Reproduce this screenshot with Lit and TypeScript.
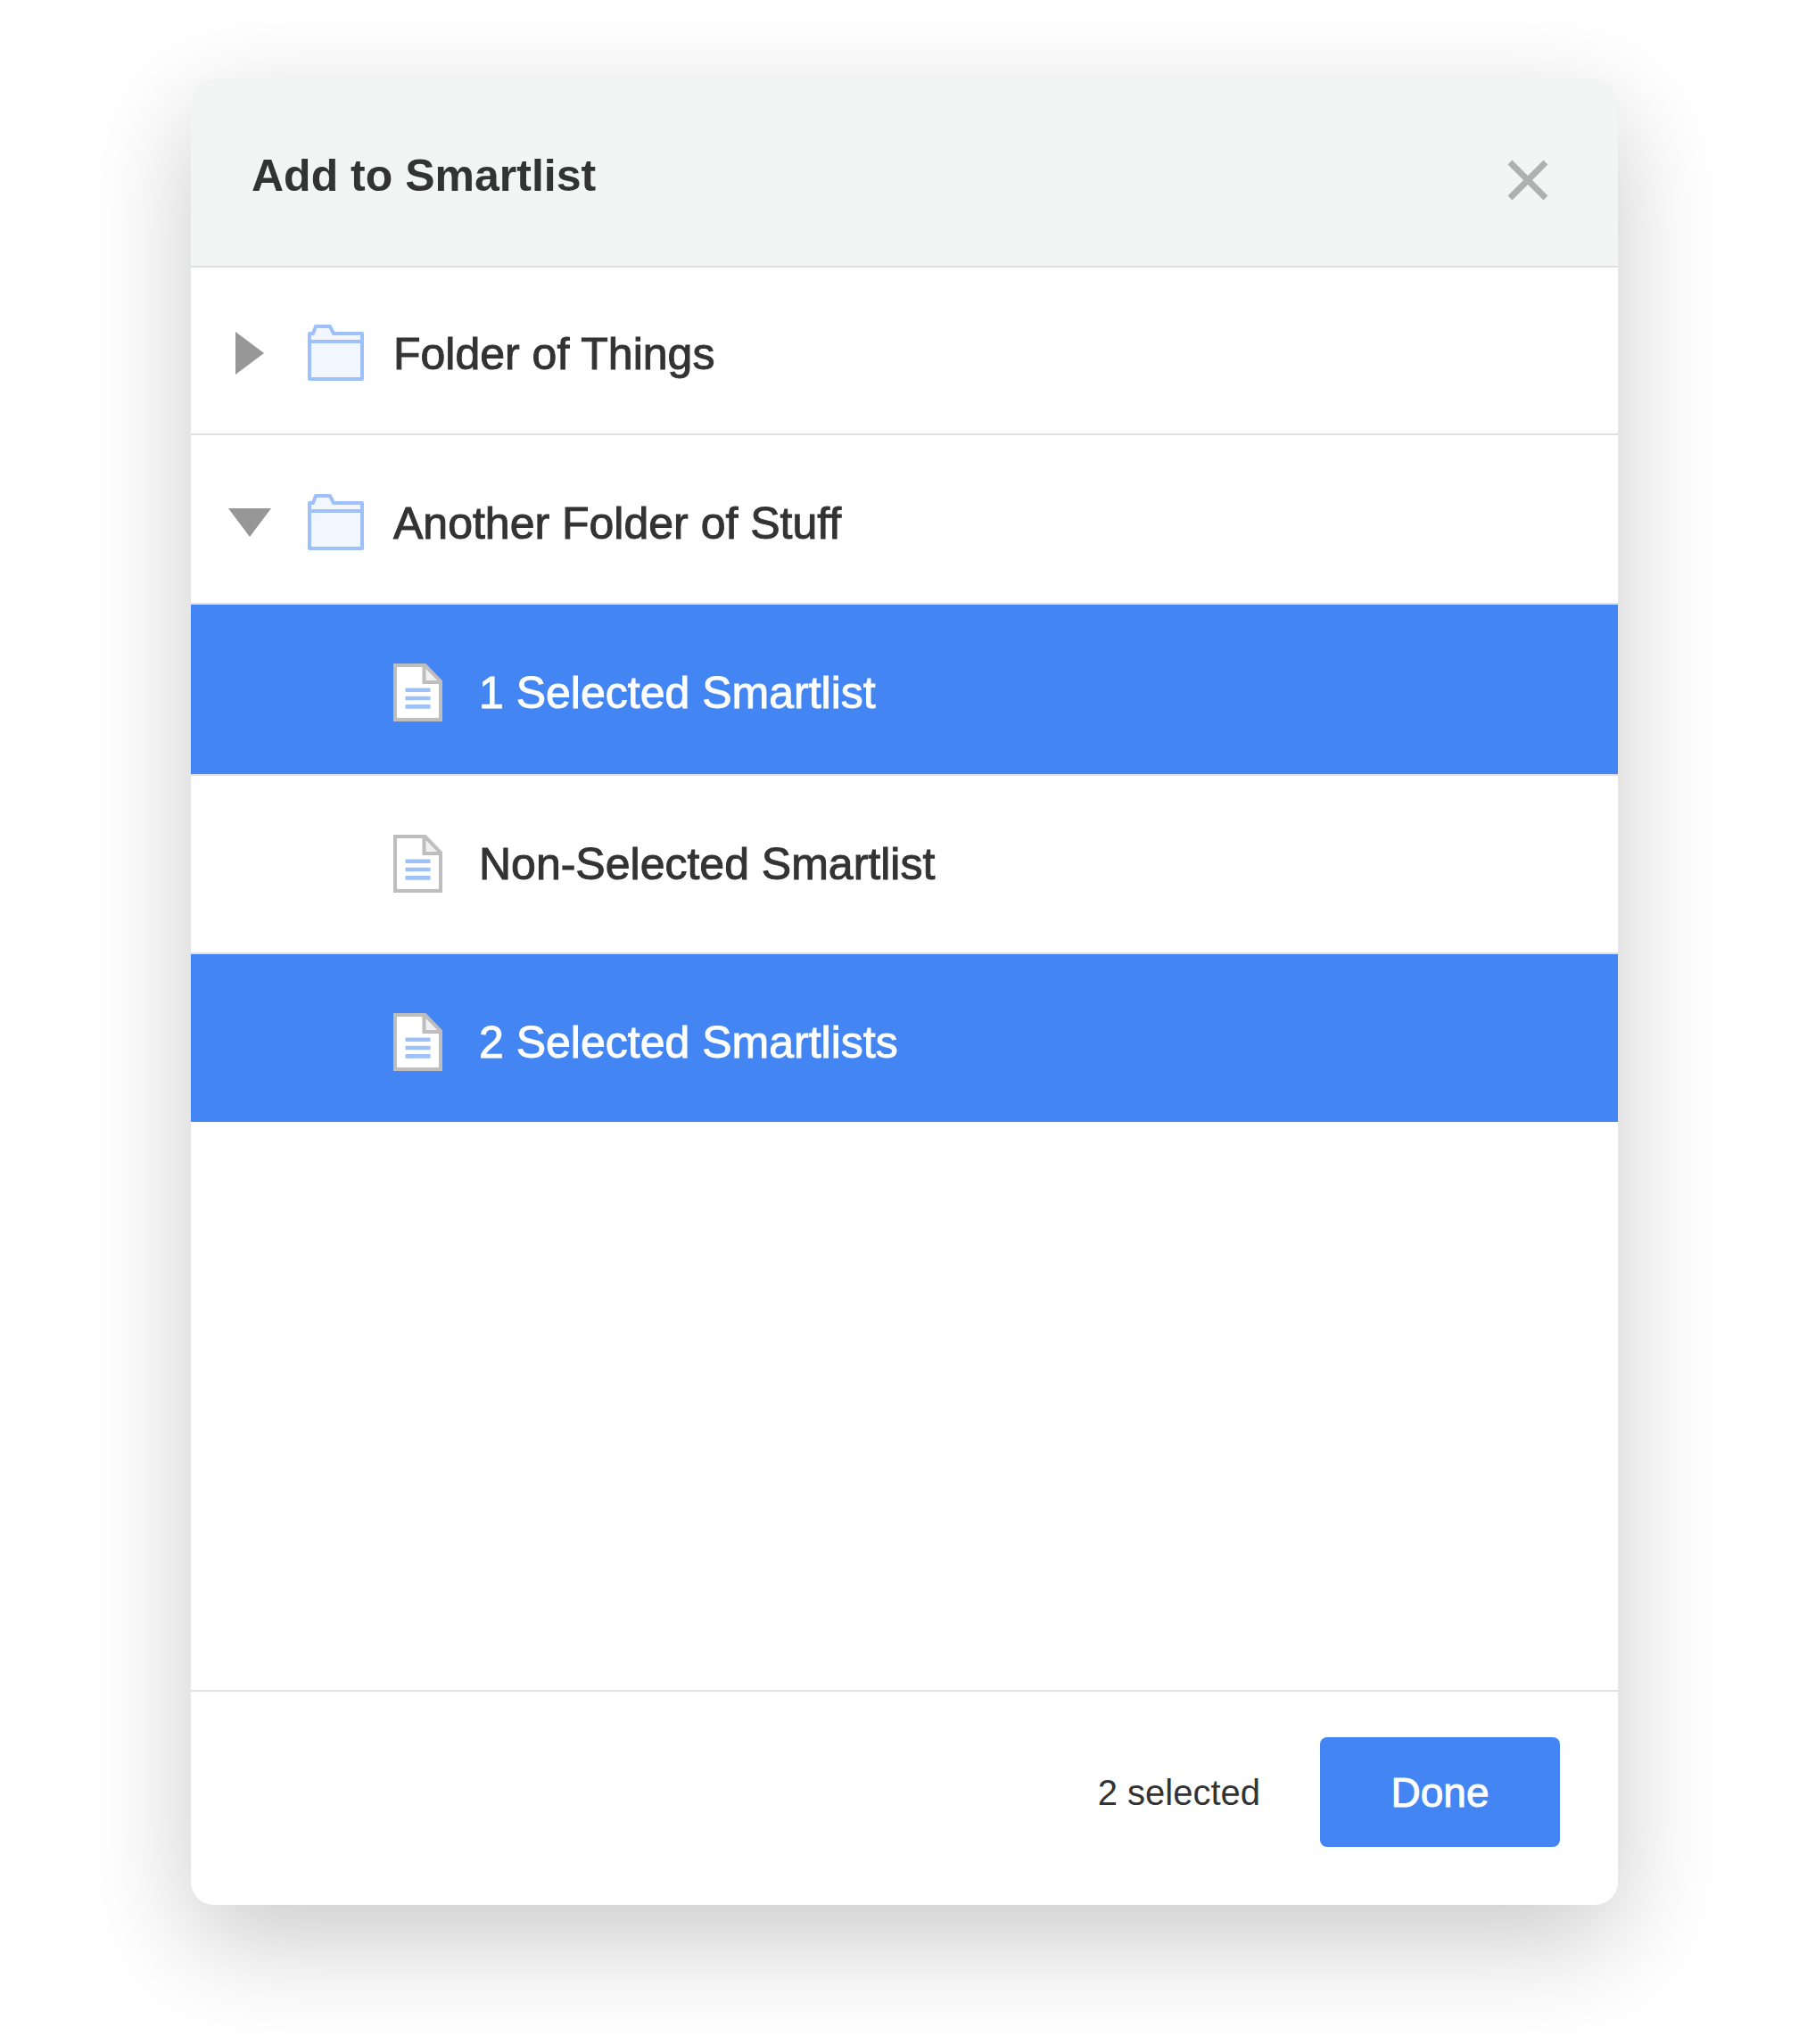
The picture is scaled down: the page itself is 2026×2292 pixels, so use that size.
import { LitElement, html, css } from "lit";
import { customElement, state } from "lit/decorators.js";

interface Smartlist {
  name: string;
  selected: boolean;
}

interface Folder {
  name: string;
  open: boolean;
  items: Smartlist[];
}

const triangleIcon = (open: boolean) => html`
  <svg class="triangle" viewBox="0 0 48 48" aria-hidden="true">
    <polygon points=${open ? "0,8 48,8 24,40" : "8,0 40,24 8,48"} />
  </svg>
`;

const folderIcon = html`
  <svg class="folder-icon" viewBox="0 0 64 64" aria-hidden="true">
    <path
      d="M2 61V10H6L9 2H25L29 10H61V61Z"
      fill="#f2f6fe"
      stroke="#9fc1fa"
      stroke-width="4"
      stroke-linejoin="round"
    />
    <path d="M2 19H61" stroke="#9fc1fa" stroke-width="4" />
  </svg>
`;

const documentIcon = html`
  <svg class="document-icon" viewBox="0 0 56 65" aria-hidden="true">
    <path d="M2 2H36L53 20V63H2Z" fill="#fff" />
    <path d="M34.500 2L53 21H34.500Z" fill="#f1f1f1" />
    <path
      d="M2 2H35.500L53 20V63H2ZM34.500 2V21H53"
      fill="none"
      stroke="#bebebe"
      stroke-width="4"
    />
    <path
      d="M13.500 29.700H41.500M13.500 39H41.500M13.500 48.400H41.500"
      stroke="#9fc1fa"
      stroke-width="4.600"
    />
  </svg>
`;

@customElement("app-root")
export class AppRoot extends LitElement {
  static styles = css`
    :host {
      display: block;
      box-sizing: border-box;
      min-height: 100vh;
      padding: 88px 212px 156px 214px;
      background: #fff;
      color: #333;
      font-family: "Liberation Sans", Arial, sans-serif;
      overflow: hidden;
    }
    * {
      box-sizing: border-box;
    }
    button {
      margin: 0;
      border: 0;
      font: inherit;
      color: inherit;
      cursor: pointer;
    }
    .dialog {
      display: flex;
      flex-direction: column;
      min-height: calc(100vh - 244px);
      border-radius: 26px;
      background: #fff;
      box-shadow: 0 40px 120px rgba(0, 0, 0, 0.21);
    }
    .header {
      display: flex;
      align-items: center;
      justify-content: space-between;
      height: 212px;
      padding: 8px 73px 0 68px;
      border-bottom: 2px solid #e0e0e0;
      border-radius: 26px 26px 0 0;
      background: #f3f5f4;
    }
    .title {
      margin: 0;
      font-size: 50px;
      line-height: 62px;
      font-weight: 700;
    }
    .close {
      display: flex;
      padding: 14px 4px 4px;
      background: none;
    }
    .close-icon {
      width: 48px;
      height: 48px;
    }
    .tree,
    .children {
      margin: 0;
      padding: 0;
      list-style: none;
    }
    .tree {
      flex: 1;
    }
    .row {
      display: flex;
      align-items: flex-start;
      width: 100%;
      min-height: 190px;
      padding: 66px 42px 0;
      border-bottom: 2px solid #e0e0e0;
      background: #fff;
      text-align: left;
    }
    .tree > :first-child > .row {
      min-height: 188px;
      padding-top: 64px;
    }
    .item {
      min-height: 200px;
      padding-left: 227px;
    }
    .selected {
      min-height: 192px;
      background: #4285f3;
      color: #fff;
    }
    .children > :last-child > .row {
      min-height: 188px;
      border-bottom: 0;
    }
    .label {
      font-size: 50px;
      line-height: 66px;
      -webkit-text-stroke: 1px currentColor;
    }
    .triangle {
      width: 48px;
      height: 48px;
      margin: 8px 41px 0 0;
      fill: #979797;
    }
    .folder-icon {
      width: 64px;
      height: 64px;
      margin-right: 32px;
    }
    .document-icon {
      width: 56px;
      height: 65px;
      margin-right: 40px;
    }
    .footer {
      display: flex;
      align-items: center;
      justify-content: flex-end;
      gap: 67px;
      padding: 51px 65px 65px;
      border-top: 2px solid #e0e0e0;
    }
    .count {
      font-size: 40px;
      line-height: 48px;
    }
    .done {
      width: 269px;
      height: 123px;
      padding: 0;
      border-radius: 8px;
      background: #4285f3;
      color: #fff;
      font-size: 46px;
      line-height: 54px;
      -webkit-text-stroke: 1px currentColor;
    }
  `;

  @state()
  private folders: Folder[] = [
    { name: "Folder of Things", open: false, items: [] },
    {
      name: "Another Folder of Stuff",
      open: true,
      items: [
        { name: "1 Selected Smartlist", selected: true },
        { name: "Non-Selected Smartlist", selected: false },
        { name: "2 Selected Smartlists", selected: true },
      ],
    },
  ];

  private toggleFolder(folder: Folder) {
    folder.open = !folder.open;
    this.requestUpdate();
  }

  private toggleItem(item: Smartlist) {
    item.selected = !item.selected;
    this.requestUpdate();
  }

  private renderItem(item: Smartlist) {
    return html`
      <li>
        <button
          class="row item ${item.selected ? "selected" : ""}"
          type="button"
          aria-pressed=${item.selected ? "true" : "false"}
          @click=${() => this.toggleItem(item)}
        >
          ${documentIcon}
          <span class="label">${item.name}</span>
        </button>
      </li>
    `;
  }

  private renderFolder(folder: Folder) {
    return html`
      <li>
        <button
          class="row"
          type="button"
          aria-expanded=${folder.open ? "true" : "false"}
          @click=${() => this.toggleFolder(folder)}
        >
          ${triangleIcon(folder.open)} ${folderIcon}
          <span class="label">${folder.name}</span>
        </button>
        ${folder.open
          ? html`<ul class="children">
              ${folder.items.map((item) => this.renderItem(item))}
            </ul>`
          : null}
      </li>
    `;
  }

  render() {
    const count = this.folders
      .flatMap((folder) => folder.items)
      .filter((item) => item.selected).length;
    return html`
      <section class="dialog" role="dialog" aria-labelledby="title">
        <header class="header">
          <h1 class="title" id="title">Add to Smartlist</h1>
          <button class="close" type="button" aria-label="Close">
            <svg class="close-icon" viewBox="0 0 48 48" aria-hidden="true">
              <path d="M4 4L44 44M44 4L4 44" stroke="#b0b0b0" stroke-width="7" />
            </svg>
          </button>
        </header>
        <ul class="tree">
          ${this.folders.map((folder) => this.renderFolder(folder))}
        </ul>
        <footer class="footer">
          <span class="count">${count} selected</span>
          <button class="done" type="button">Done</button>
        </footer>
      </section>
    `;
  }
}
